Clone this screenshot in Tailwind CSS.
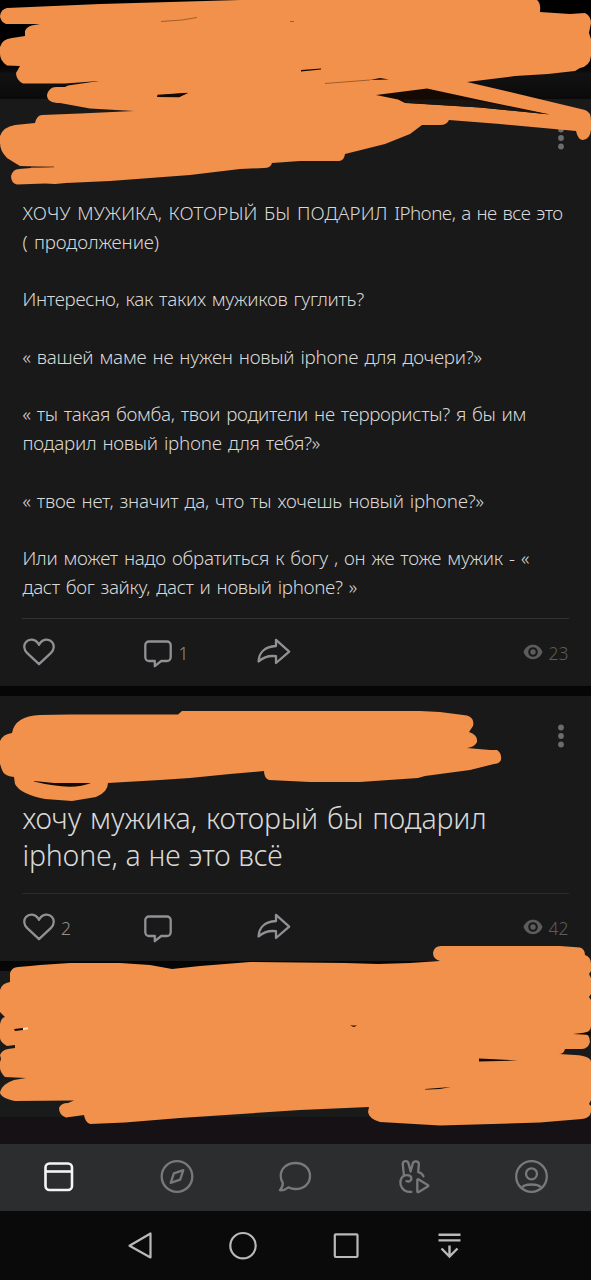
<!DOCTYPE html>
<html lang="ru">
<head>
<meta charset="utf-8">
<title>Лента</title>
<script src="https://cdn.jsdelivr.net/npm/@tailwindcss/browser@4"></script>
</head>
<body class="bg-[#060606]">
<svg width="0" height="0" class="absolute">
  <defs>
    <symbol id="heart" viewBox="0 0 32 28"><path d="M16 26.200 4 14.900C.6 11.400.5 6.900 3 4c3.300-3.700 9.300-3.100 12 1.200L16 6.800l1-1.600C19.700.9 25.700.3 29 4c2.500 2.900 2.400 7.400-1 10.900Z" fill="none" stroke="currentColor" stroke-width="2.300" stroke-linejoin="round"/></symbol>
    <symbol id="comment" viewBox="0 0 28 28"><path d="M5 1.500h18a3.700 3.700 0 0 1 3.700 3.700v12.100A3.700 3.700 0 0 1 23 21h-5.800L10.800 26.200V21H5a3.700 3.700 0 0 1-3.700-3.700V5.200A3.700 3.700 0 0 1 5 1.500Z" fill="none" stroke="currentColor" stroke-width="2.300" stroke-linejoin="round"/></symbol>
    <symbol id="share" viewBox="0 0 34 28"><path d="M19 1.800 32.200 13.700 19 25v-6.800C11.500 17.300 6.500 19 1.600 23.500 1.800 14.800 7.500 8.700 19 8Z" fill="none" stroke="currentColor" stroke-width="2.300" stroke-linejoin="round"/></symbol>
    <symbol id="eye" viewBox="0 0 20 16"><path fill-rule="evenodd" fill="currentColor" d="M10 .8c4.300 0 7.900 2.700 9.500 7.200-1.600 4.500-5.200 7.200-9.500 7.200S2.100 12.500.5 8C2.100 3.500 5.700.8 10 .8ZM10 3.200a4.800 4.800 0 1 0 0 9.600 4.800 4.800 0 0 0 0-9.600Zm0 2.100a2.700 2.700 0 1 1 0 5.400 2.700 2.700 0 0 1 0-5.400Z"/></symbol>
    <symbol id="dots" viewBox="0 0 6 24"><g fill="currentColor"><circle cx="3" cy="3.500" r="2.900"/><circle cx="3" cy="12" r="2.900"/><circle cx="3" cy="20.500" r="2.900"/></g></symbol>
  </defs>
</svg>

<div class="relative flex h-[1280px] w-[591px] flex-col overflow-hidden font-['Noto_Sans',sans-serif] font-light text-[#d8d8d8]">
  <header class="h-[99px] shrink-0 bg-linear-to-b from-black from-55% via-[#121212] via-75% to-[#0a0a0a]"></header>

  <main class="flex h-[1045px] shrink-0 flex-col gap-[10px] bg-[#060606]">
    <article class="h-[587px] shrink-0 bg-[#191919] px-[22px]">
      <div class="flex h-[100px] items-start justify-end pt-[27px]">
        <svg class="mr-[5.5px] h-6 w-1.5 text-[#6c6c6c]"><use href="#dots"/></svg>
      </div>
      <div class="flex h-[420px] flex-col border-b border-[#333] pl-[0.5px] text-[18.800px] leading-[28.750px] whitespace-pre [word-spacing:1.5px]">
        <p><span class="block tracking-[0.11px]">ХОЧУ МУЖИКА, КОТОРЫЙ БЫ ПОДАРИЛ <span class="tracking-[-0.54px]">IPhone, а не все это</span></span><span class="block tracking-[-0.1px]">( продолжение)</span></p>
        <p class="mt-[28.750px] tracking-[-0.29px]">Интересно, как таких мужиков гуглить?</p>
        <p class="mt-[28.750px] tracking-[-0.25px]">« вашей маме не нужен новый iphone для дочери?»</p>
        <p class="mt-[28.750px] tracking-[-0.32px]">« ты такая бомба, твои родители не террористы? я бы им<br><span class="tracking-[-0.27px]">подарил новый iphone для тебя?»</span></p>
        <p class="mt-[28.750px] tracking-[-0.25px]">« твое нет, значит да, что ты хочешь новый iphone?»</p>
        <p class="mt-[28.750px]"><span class="block tracking-[-0.28px]">Или может надо обратиться к богу , он же тоже мужик - «</span><span class="block tracking-[-0.34px]">даст бог зайку, даст и новый iphone? »</span></p>
      </div>
      <div class="flex h-[66px] items-center text-[17.500px] text-[#909194]">
        <div class="flex w-[121px] items-center"><svg class="ml-px h-7 w-8"><use href="#heart"/></svg></div>
        <div class="flex w-[114px] items-center"><svg class="mt-1 ml-[0.5px] h-7 w-7"><use href="#comment"/></svg><span class="ml-[7px] pt-[2px]">1</span></div>
        <svg class="h-7 w-[34px]"><use href="#share"/></svg>
        <div class="ml-auto flex items-center text-[#5c5c5c]"><svg class="mr-1.5 h-4 w-5"><use href="#eye"/></svg><span class="mr-[0.4px] pt-[2px]">23</span></div>
      </div>
    </article>

    <article class="h-[265px] shrink-0 bg-[#191919] px-[22px]">
      <div class="flex h-[104px] items-start justify-end pt-7">
        <svg class="mr-[5.5px] h-6 w-1.5 text-[#6c6c6c]"><use href="#dots"/></svg>
      </div>
      <h2 class="h-[94px] border-b border-[#2b2b2b] pl-[0.5px] text-[28.500px] leading-[36.800px] whitespace-pre"><span class="block tracking-[-0.08px] [word-spacing:1.5px]">хочу мужика, который бы подарил</span><span class="block tracking-[-0.22px] [word-spacing:0.8px]">iphone, а не это всё</span></h2>
      <div class="flex h-[66px] items-center text-[17.500px] text-[#909194]">
        <div class="flex w-[121px] items-center"><svg class="ml-px h-7 w-8"><use href="#heart"/></svg><span class="ml-1.5 pt-[2px]">2</span></div>
        <div class="flex w-[114px] items-center"><svg class="mt-1 ml-[0.5px] h-7 w-7"><use href="#comment"/></svg></div>
        <svg class="h-7 w-[34px]"><use href="#share"/></svg>
        <div class="ml-auto flex items-center text-[#5c5c5c]"><svg class="mr-1.5 h-4 w-5"><use href="#eye"/></svg><span class="mr-[0.4px] pt-[2px]">42</span></div>
      </div>
    </article>

    <article class="flex-1 bg-[#191b1b] pt-[146px]"><div class="h-full bg-[#151114]"></div></article>
  </main>

  <nav class="grid h-[67px] shrink-0 grid-cols-5 place-items-center bg-[#2c2d2f] pb-px text-[#78797a]">
    <svg class="size-9 text-[#f5f5f5]" viewBox="0 0 36 36" fill="none" stroke="currentColor" stroke-width="2.600"><rect x="4.500" y="4.500" width="26.500" height="26.500" rx="4"/><path d="M5 12.500h26"/></svg>
    <svg class="size-9" viewBox="0 0 36 36" fill="none" stroke="currentColor" stroke-width="2.300" stroke-linejoin="round"><circle cx="18" cy="17.500" r="15.300"/><path d="m24.300 11.200-3.100 9.400-9.500 3.200 3.200-9.400Z"/></svg>
    <svg class="size-9" viewBox="0 0 36 36" fill="none" stroke="currentColor" stroke-width="2.300" stroke-linejoin="round"><path d="M18.500 4C27 4 33 9.500 33 17s-6 13-14.500 13c-2.700 0-5-.6-7-1.700-2.500 2-5 3.200-8.600 2.900 2.200-2.400 3-4.500 2.900-7.200C4.300 21.900 3.700 19.600 3.700 17c0-7.500 6.300-13 14.800-13Z"/></svg>
    <svg class="size-9" viewBox="0 0 36 36" fill="none" stroke="currentColor" stroke-width="2.300" stroke-linecap="round" stroke-linejoin="round"><path d="M7.800 15.500 6.800 5.500C6.500 1.300 12 .9 12.600 4.800L14.600 12.500 16.700 4.700C17.800 1 23.400 2 22.800 5.800L22.200 13.200Q25.700 13.800 27.400 17.200"/><path d="M10.500 22.200C13.500 23.200 15.800 21.400 15.300 18.800 14.700 15.600 8.300 14.900 5.600 18.800 3 23 4.600 29 8.600 31.400 10.700 32.700 13 33.100 15.300 32.900"/><path d="M21.300 21v11.200q0 1.500 1.400.7l9-5.300q1.200-.8 0-1.600l-9-5.500q-1.400-.8-1.400.5Z"/></svg>
    <svg class="size-9" viewBox="0 0 36 36" fill="none" stroke="currentColor" stroke-width="2.300"><circle cx="17.500" cy="17.500" r="15.300"/><circle cx="17.500" cy="14.800" r="5.500"/><path d="M8 28.500c2.500-4 16.500-4 19 0"/></svg>
  </nav>

  <footer class="flex h-[69px] shrink-0 items-center justify-center gap-[67px] bg-[#0a0a0a] pr-[2px] text-[#b9b9b9]">
    <svg class="size-9" viewBox="0 0 36 36" fill="none" stroke="currentColor" stroke-width="2.200" stroke-linejoin="round"><path d="M28.500 5.500v24L7.500 17.800Z"/></svg>
    <svg class="size-9" viewBox="0 0 36 36" fill="none" stroke="currentColor" stroke-width="2.200"><circle cx="18" cy="17.700" r="12.700"/></svg>
    <svg class="size-9" viewBox="0 0 36 36" fill="none" stroke="currentColor" stroke-width="2.200"><rect x="6.800" y="6.300" width="22.700" height="22.700" rx="1"/></svg>
    <svg class="size-9" viewBox="0 0 36 36" fill="none" stroke="currentColor" stroke-width="2.400"><path d="M7.500 6.700h22M7.500 12.400h22M18.500 17.500v11M10.500 20.500l8 8 8-8"/></svg>
  </footer>

  <!-- marker strokes drawn over the feed -->
  <svg class="pointer-events-none absolute inset-0" width="591" height="1280" viewBox="0 0 591 1280">
    <g fill="#f1914b">
      <path d="M7 8 100 4 240 0H537Q541 3 540 12L570 14 585 13Q591 16 591 23L589 33 591 39V56Q590 66 580 68L575 71 548 74 515 76 467 82 510 92 585 110Q591 112 591 120V130Q590 139 583 140 578 140 576 131L500 124 449 120Q447 125 440 125H422L410 134 385 144 345 154Q344 161 339 161H300L272 163Q271 168 264 168L240 169 190 175 110 181 66 183 55 184 45 183.500 17 184.500Q11 183 11 176 13 169 19 169L31 168 55 167 20 166 15 163 7 158Q0 151 0 143V136Q3 127 15 125L35 123Q37 115 42 115L80 113.500 134 111 90 108.500 60 103Q47 103 47 95 49 87 56 87L65 87 68 85.500 99 81 65 83.500 23 83.500Q16 80 16 73L20 66 7 65.500Q0 61 0 54V47Q2 39 12 38L25 36V31Q27 26 34 25L40 24 6 24Q0 21 0 16 1 9 7 8Z"/>
      <path d="M12 733Q15 716 40 715L70 714.500 178 714.500 182 711H420L440 712 467 715.500Q475 718 473 726L469 732Q478 735 477 742 475 747 467 748L490 750 497 750Q502 753 501 760 499 764 494 764L470 770 425 776 418 778 360 782H310L269 780Q264 778 264 771L230 774 190 778 160 780 108 783Q108 792 96 797L72 801 45 799Q20 794 15 784L14 777Q4 776 2 770L0 764V741Q3 734 12 733Z"/>
      <path d="M10 973Q12 967 18 967L30 966 40 965 70 963H120L150 965 172 969 200 966 250 962 345 963 378 964 410 963 440 961Q433 959 433 953 434 946 441 946H560L580 947.500Q585 949 585 955 591 957 591 964V971L589 974 591 978V994L589 997 591 1000V1026Q591 1032 583 1033 590 1034 590 1042 588 1049 582 1049H565Q564 1054 559 1054L575 1055Q591 1056 591 1062V1100L589 1104 591 1106V1112Q590 1118 582 1119L540 1122.500 440 1125.500 380 1122Q369 1119 368 1112L369 1107 300 1110 180 1118 125 1122.500 90 1124Q85 1122 84 1115L66 1117.500Q59 1115 59 1108 61 1103 68 1103L74 1100.500 15 1101Q0 1098 0 1092 2 1084 14 1080L26 1078 5 1077Q0 1072 0 1068V1062L1 1059 0 1055Q2 1050 8 1049L15 1048V1045L7 1046Q0 1042 0 1038V1024Q1 1018 5 1017L0 1012V990Q2 983 10 982Z"/>
    </g>
    <g fill="#150904">
      <path d="M157 97 167 94.500 188 93 179 97ZM301 70 321 68.500 321 69.500 301 71.500ZM370 80 380 78 389 79.500ZM376 95 427 88.500 480 100 550 114.500 480 107.500 405 103 398 99.500ZM34 781 54 783 91 783Q72 791 34 781.500ZM479 1058.500 518 1060.500 479 1061.500ZM573 1034 591 1032V1035ZM425 1089 451 1087Q438 1090 425 1089.500ZM14 1029 23 1028V1030L15 1031ZM350 1025.500 357 1025.500 354 1027Z"/>
      <path d="M403 99.500 470 99.500 548 114.300 480 107.500 405 102.800Z" fill="#191512"/>
    </g>
    <path d="M161 21.500 182 20 197 17.500M325 83.500 370 80M290 21.500h4" fill="none" stroke="#6b3a18" stroke-width=".6"/>
    <path d="M31 167.300 54 166.800" stroke="#8b5228" stroke-width="1"/>
    <path d="m23 1029 5-.7" stroke="#f6e6b8" stroke-width="2"/>
    <path d="M157.500 94.800 181 93.300 188 92.800 179 97.300 157 97Z" fill="#150904"/>
  </svg>
</div>
</body>
</html>
